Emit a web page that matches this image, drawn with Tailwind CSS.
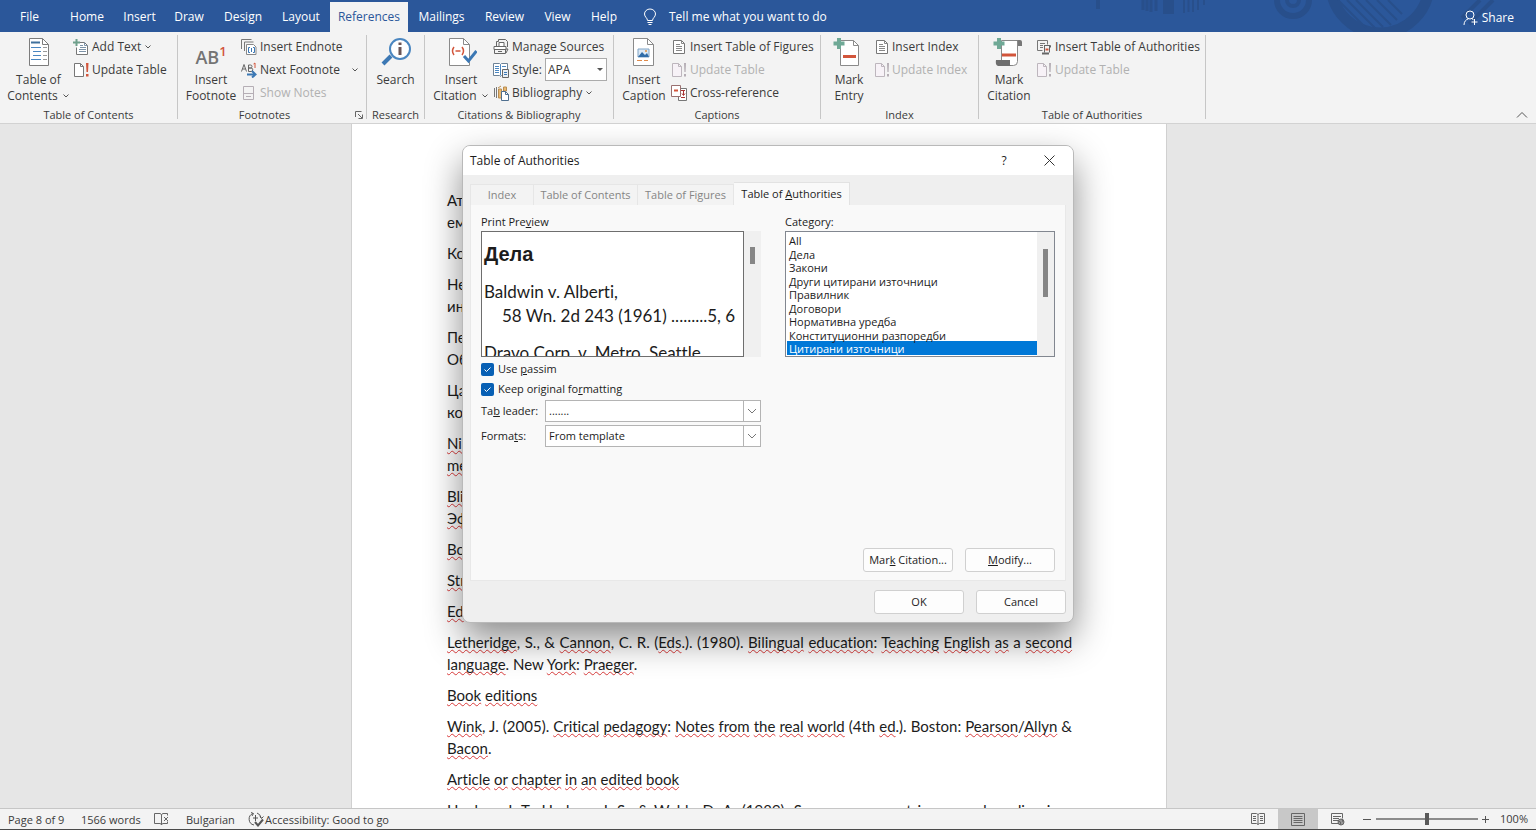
<!DOCTYPE html>
<html lang="en">
<head>
    <meta charset="UTF-8">
    <meta name="viewport" content="width=device-width, initial-scale=1.0">
    <title>Word - References</title>
    <script src="https://cdn.jsdelivr.net/npm/@tailwindcss/browser@4"></script>
</head>
<body class="h-screen overflow-hidden flex flex-col bg-[#e6e6e6] font-['Open_Sans',sans-serif] text-[12px] leading-4 text-[#3b3b3b]">

    <!-- Shared icons -->
    <svg class="hidden">
        <symbol id="i-update" viewBox="0 0 16 16">
            <path d="M1.5 1.5h6l3 3v10h-9z" fill="#fff" stroke="#777"/>
            <path d="M7.5 1.5v3h3" fill="none" stroke="#777"/>
            <path d="M13 1h2.5l-.5 9h-1.500zM13 12h2.500v2.500h-2.500z" fill="#d2553b"/>
        </symbol>
        <symbol id="i-update-off" viewBox="0 0 16 16">
            <path d="M1.500 1.500h6l3 3v10h-9z" fill="#f7f2f7" stroke="#bdb6bd"/>
            <path d="M7.500 1.500v3h3" fill="none" stroke="#bdb6bd"/>
            <path d="M13 1h2l-.4 9h-1.200zM13 12h2v2.500h-2z" fill="#b5aeb5"/>
        </symbol>
        <symbol id="i-list" viewBox="0 0 16 16">
            <path d="M2.500 1.500h8l3 3v10h-11z" fill="#fff" stroke="#777"/>
            <path d="M10.500 1.500v3h3M5 5.500h4M5 7.500h6M5 9.500h6M5 11.500h6" fill="none" stroke="#888"/>
        </symbol>
        <symbol id="i-down" viewBox="0 0 8 8">
            <path d="M1.500 2.500l2.500 2.500l2.500-2.500" fill="none" stroke="#555"/>
        </symbol>
        <symbol id="i-chevron" viewBox="0 0 10 10">
            <path d="M1 3l4 4l4-4" fill="none" stroke="#777"/>
        </symbol>
    </svg>

    <!-- Ribbon tabs -->
    <header class="relative h-8 shrink-0 bg-[#2b579a] text-white flex">
        <svg class="absolute right-0 top-0" width="446" height="32" viewBox="1090 0 446 32" fill="none" stroke="#284f8b">
            <path d="M1098 0v9" stroke-width="4"/>
            <path d="M1143 0v10M1147 0v11M1151 0v12M1156 0v11" stroke-width="3"/>
            <path d="M1168.500 0v14" stroke-width="11"/>
            <path d="M1184 0v13M1188.500 0v12M1193 0v12M1198 0v10M1204 0v5" stroke-width="2"/>
            <circle cx="1293" cy="0" r="16" stroke-width="6"/>
            <circle cx="1293" cy="0" r="6" stroke-width="4"/>
            <circle cx="1380" cy="-16" r="49" stroke-width="11"/>
            <path d="M1338 0l28 28M1347 0l28 28M1356 0l27 27M1366 0l25 25M1377 0l20 20M1388 0l14 14" stroke-width="2"/>
            <path d="M1480 0l-18 18M1493 0l-24 24" stroke-width="4"/>
        </svg>
        <nav class="flex items-end">
            <button class="w-[59px] h-[30px]">File</button>
            <button class="w-[56px] h-[30px]">Home</button>
            <button class="w-[49px] h-[30px]">Insert</button>
            <button class="w-[50px] h-[30px]">Draw</button>
            <button class="w-[58px] h-[30px]">Design</button>
            <button class="w-[58px] h-[30px]">Layout</button>
            <button class="w-[78px] h-[30px] bg-[#f3f3f3] text-[#2b579a]">References</button>
            <button class="w-[67px] h-[30px]">Mailings</button>
            <button class="w-[59px] h-[30px]">Review</button>
            <button class="w-[47px] h-[30px]">View</button>
            <button class="w-[46px] h-[30px]">Help</button>
            <button class="h-[30px] ml-4 flex items-center gap-3">
                <svg width="14" height="18" viewBox="0 0 14 18" fill="none" stroke="#fff">
                    <path d="M4.500 12.500c0-2.500-3-3.500-3-6.500a5.500 5 0 0 1 11 0c0 3-3 4-3 6.500zM4.500 14.500h5M5.500 16.500h3"/>
                </svg>
                Tell me what you want to do
            </button>
        </nav>
        <button class="relative ml-auto mr-[22px] mt-1 flex items-center gap-1">
            <svg width="15" height="16" viewBox="0 0 15 16" fill="none" stroke="#fff">
                <circle cx="7" cy="5" r="4"/>
                <path d="M1 15c0-3.500 2-5.500 4.500-6.200M9 8.800l1.500 1M11.500 9v6M8.500 12h6"/>
            </svg>
            Share
        </button>
    </header>

    <!-- Ribbon -->
    <section class="relative h-[92px] shrink-0 bg-[#f3f3f3] border-b border-[#d2d2d2] flex pt-[3px] pb-1">

        <div class="w-[178px] border-r border-[#c6c6c6] flex flex-col">
            <div class="flex h-[72px] shrink-0">
                <button class="w-[73px] ml-[2px] flex flex-col items-center justify-start">
                    <svg class="shrink-0" width="32" height="32" viewBox="0 0 32 32" fill="none">
                        <path d="M6.500 3.500h13l6 6v21h-19z" fill="#fff" stroke="#7c7c7c"/>
                        <path d="M19.500 3.500v6h6" stroke="#7c7c7c"/>
                        <path d="M8 7.500h9" stroke="#41719c" stroke-width="2"/>
                        <path d="M8 12.500h10M10 16.500h8M10 20.500h8M8 24.500h10" stroke="#4a86c0"/>
                        <path d="M20 12.500h4M20 16.500h4M20 20.500h4M20 24.500h4" stroke="#999"/>
                    </svg>
                    <span class="mt-[5px]">Table of</span>
                    <span class="flex items-center gap-1">Contents <svg width="8" height="8"><use href="#i-down"/></svg></span>
                </button>
                <div class="flex flex-col">
                    <button class="h-[23px] flex items-center gap-[3px] -ml-[2px]">
                        <svg width="16" height="16" viewBox="0 0 16 16" fill="none">
                            <path d="M4.500 3.500h7l3 3v9h-11v-7" fill="#fff" stroke="#777"/>
                            <path d="M11.500 3.500v3h3M7 6.500h3M7 8.500h6M6 10.500h7M6 12.500h7" stroke="#7d93a8"/>
                            <path d="M3.500 0v7M0 3.500h7" stroke="#6fa08c" stroke-width="2"/>
                        </svg>
                        Add Text <svg width="8" height="8"><use href="#i-down"/></svg>
                    </button>
                    <button class="h-[23px] flex items-center gap-[3px] -ml-[2px]"><svg width="16" height="16"><use href="#i-update"/></svg>Update Table</button>
                </div>
            </div>
            <div class="text-[11px] leading-4 text-center">Table of Contents</div>
        </div>

        <div class="w-[189px] border-r border-[#c6c6c6] flex flex-col">
            <div class="flex h-[72px] shrink-0">
                <button class="w-[60px] ml-[3px] flex flex-col items-center justify-start">
                    <span class="h-8 pt-[8px] flex text-[18px] leading-[28px] font-semibold text-[#747474]">AB<sup class="text-[13px] leading-4 text-[#d2553b] top-0 self-start">1</sup></span>
                    <span class="mt-[5px]">Insert</span>
                    <span>Footnote</span>
                </button>
                <div class="flex flex-col">
                    <button class="h-[23px] flex items-center gap-[3px]">
                        <svg width="16" height="16" viewBox="0 0 16 16" fill="none">
                            <path d="M.500 10v-9.500h10M3.500 12v-9h9" stroke="#777"/>
                            <path d="M5.500 5.500h7l2.500 2.500v7.500h-9.500z" fill="#fff" stroke="#888"/>
                            <path d="M9 8.500h-1.500v5h1.500M12 8.500h1.500v5h-1.500M10.500 9v4" stroke="#3c78b4"/>
                        </svg>
                        Insert Endnote
                    </button>
                    <button class="h-[23px] flex items-center gap-[3px]">
                        <svg width="16" height="16" viewBox="0 0 16 16" fill="none">
                            <path d="M.5 9.500l2.500-7l2.500 7M1.500 7h3M7.500 9.500v-6.500h2a1.500 1.500 0 0 1 0 3h-2h2.500a1.700 1.700 0 0 1 0 3.500z" stroke="#666"/>
                            <path d="M12.500 2l1.500-1v5" stroke="#d2553b"/>
                            <path d="M6 12.500h8M11 9l3.500 3.500l-3.500 3" stroke="#3c78b4" stroke-width="2"/>
                        </svg>
                        Next Footnote <svg class="ml-2" width="8" height="8"><use href="#i-down"/></svg>
                    </button>
                    <button disabled class="h-[23px] flex items-center gap-[3px] text-[#b1b1b1]">
                        <svg width="16" height="16" viewBox="0 0 16 16" fill="none" stroke="#b5aeb5">
                            <path d="M2.500 1.500h10v13h-10zM2.500 8.500h10M5 11.500h5"/>
                        </svg>
                        Show Notes
                    </button>
                </div>
            </div>
            <div class="flex text-[11px] leading-4">
                <span class="flex-1 text-center pr-1">Footnotes</span>
                <button class="mr-[3px]" aria-label="Footnote settings">
                    <svg width="8" height="8" viewBox="0 0 8 8" fill="none" stroke="#666"><path d="M.5 6v-5.500h6M3 3l4 4M7.500 3.500v4h-4"/></svg>
                </button>
            </div>
        </div>

        <div class="w-[58px] border-r border-[#c6c6c6] flex flex-col">
            <div class="flex h-[72px] shrink-0 justify-center">
                <button class="flex flex-col items-center justify-start">
                    <svg class="shrink-0" width="32" height="32" viewBox="0 0 32 32" fill="none">
                        <path d="M11 21l-8 8" stroke="#3c78b4" stroke-width="4"/>
                        <circle cx="20" cy="14" r="10" fill="#fff" stroke="#4a86c0" stroke-width="2"/>
                        <path d="M20 12v8M20 7.500v2.500" stroke="#6a5555" stroke-width="3"/>
                    </svg>
                    <span class="mt-[5px]">Search</span>
                </button>
            </div>
            <div class="text-[11px] leading-4 text-center">Research</div>
        </div>

        <div class="w-[189px] border-r border-[#c6c6c6] flex flex-col">
            <div class="flex h-[72px] shrink-0">
                <button class="w-[64px] ml-1 flex flex-col items-center justify-start">
                    <svg class="shrink-0" width="32" height="32" viewBox="0 0 32 32" fill="none">
                        <path d="M4.500 3.500h14l6 6v21h-20z" fill="#fff" stroke="#8a8a8a"/>
                        <path d="M18.500 3.500v6h6" stroke="#8a8a8a"/>
                        <path d="M9 12q-3 4 0 8M17 12q3 4 0 8M10.500 16h5" stroke="#d2553b" stroke-width="1.500"/>
                        <path d="M19 21l4.500 5l8-10" stroke="#3c78b4" stroke-width="3"/>
                    </svg>
                    <span class="mt-[5px]">Insert</span>
                    <span class="flex items-center gap-1">Citation <svg width="8" height="8"><use href="#i-down"/></svg></span>
                </button>
                <div class="flex flex-col">
                    <button class="h-[23px] flex items-center gap-[3px]">
                        <svg width="16" height="16" viewBox="0 0 16 16" fill="none" stroke="#666">
                            <path d="M3.500 7v-4.500h2v-2h7l2 2v5.500"/><path d="M6 7v-3.500h5v3.500" fill="#fff"/>
                            <path d="M1 7.500h12v3h-12z" fill="#fff"/><path d="M1.500 10.500h11v4h-11zM5 12.500h4M13 10h2l-2 4"/>
                        </svg>
                        Manage Sources
                    </button>
                    <div class="h-[23px] flex items-center gap-[3px]">
                        <svg width="16" height="16" viewBox="0 0 16 16" fill="none">
                            <path d="M.5 1.500h6l1 1l1-1h6v12h-6l-1 1l-1-1h-6z" fill="#fff" stroke="#6d8296"/>
                            <path d="M7.500 2.500v11M2 4.500h4M2 6.500h4M2 8.500h4M2 10.500h4M9 4.500h4" stroke="#4a86c0"/>
                            <path d="M9.500 7.500h6v8h-6z" fill="#e8eef4" stroke="#666"/><path d="M11 10.500h3M11 12.500h3" stroke="#3c78b4"/>
                        </svg>
                        <label for="style" class="w-[30px]">Style:</label>
                        <span class="relative h-[23px]">
                            <select id="style" class="appearance-none w-[62px] h-[23px] bg-white border border-[#ababab] pl-[2px]"><option>APA</option></select>
                            <svg class="absolute right-1 top-[10px] pointer-events-none" width="6" height="4" viewBox="0 0 6 4"><path d="M0 0h6l-3 3z" fill="#555"/></svg>
                        </span>
                    </div>
                    <button class="h-[23px] flex items-center gap-[3px]">
                        <svg width="16" height="16" viewBox="0 0 16 16" fill="none">
                            <path d="M1.500 3v9M3.500 2v11" stroke="#777"/><path d="M5.500 4h3v9h-3z" fill="#e9b872" stroke="#b98d50"/>
                            <path d="M5 3l3-2M10.500 2h3v4h-3z" fill="#e9b872" stroke="#b98d50"/>
                            <path d="M8.500 6.500h4l3 3v6h-7z" fill="#fff" stroke="#4f6f8f"/><path d="M12.500 6.500v3h3" stroke="#4f6f8f"/>
                        </svg>
                        Bibliography <svg width="8" height="8"><use href="#i-down"/></svg>
                    </button>
                </div>
            </div>
            <div class="text-[11px] leading-4 text-center">Citations &amp; Bibliography</div>
        </div>

        <div class="w-[207px] border-r border-[#c6c6c6] flex flex-col">
            <div class="flex h-[72px] shrink-0">
                <button class="w-[54px] ml-[3px] flex flex-col items-center justify-start">
                    <svg class="shrink-0" width="32" height="32" viewBox="0 0 32 32" fill="none">
                        <path d="M5.500 3.500h14l6 6v21h-20z" fill="#fff" stroke="#8a8a8a"/>
                        <path d="M19.500 3.500v6h6" stroke="#8a8a8a"/>
                        <path d="M10 14h11v8h-11z" fill="#dce9f5" stroke="#7fa3c5"/>
                        <path d="M10 22l4-5l3 3l2-2l2 4z" fill="#2f6ca8"/><circle cx="18" cy="16" r="1" fill="#e0903c"/>
                        <path d="M9 25.500h5M16 25.500h4" stroke="#e08a4a"/>
                    </svg>
                    <span class="mt-[5px]">Insert</span>
                    <span>Caption</span>
                </button>
                <div class="flex flex-col">
                    <button class="h-[23px] flex items-center gap-[3px]"><svg width="16" height="16"><use href="#i-list"/></svg>Insert Table of Figures</button>
                    <button disabled class="h-[23px] flex items-center gap-[3px] text-[#b1b1b1]"><svg width="16" height="16"><use href="#i-update-off"/></svg>Update Table</button>
                    <button class="h-[23px] flex items-center gap-[3px]">
                        <svg width="16" height="16" viewBox="0 0 16 16" fill="none">
                            <path d="M7.500 3.500h8v12h-8z" fill="#fff" stroke="#777"/>
                            <path d="M.5 .500h9v11h-9z" fill="#fff" stroke="#9a7070"/>
                            <path d="M3 5.500h4" stroke="#d2553b" stroke-width="2"/><path d="M10 5.500h4M12.500 6v4M11 8.500l1.500 2l1.500-2M10 12.500h4" stroke="#a33"/>
                        </svg>
                        Cross-reference
                    </button>
                </div>
            </div>
            <div class="text-[11px] leading-4 text-center">Captions</div>
        </div>

        <div class="w-[158px] border-r border-[#c6c6c6] flex flex-col">
            <div class="flex h-[72px] shrink-0">
                <button class="w-[50px] ml-[3px] flex flex-col items-center justify-start">
                    <svg class="shrink-0" width="32" height="32" viewBox="0 0 32 32" fill="none">
                        <path d="M7.500 5.500h13l5 5v20h-18z" fill="#fff" stroke="#8a8a8a"/>
                        <path d="M20.500 5.500v5h5" stroke="#8a8a8a"/>
                        <path d="M6 3v11M.5 8.500h11" stroke="#6fa996" stroke-width="4"/>
                        <path d="M10 21.500h13" stroke="#d2553b" stroke-width="3"/>
                    </svg>
                    <span class="mt-[5px]">Mark</span>
                    <span>Entry</span>
                </button>
                <div class="flex flex-col">
                    <button class="h-[23px] flex items-center gap-[2px]"><svg width="16" height="16"><use href="#i-list"/></svg>Insert Index</button>
                    <button disabled class="h-[23px] flex items-center gap-[2px] text-[#b1b1b1]"><svg width="16" height="16"><use href="#i-update-off"/></svg>Update Index</button>
                </div>
            </div>
            <div class="text-[11px] leading-4 text-center">Index</div>
        </div>

        <div class="w-[227px] border-r border-[#c6c6c6] flex flex-col">
            <div class="flex h-[72px] shrink-0">
                <button class="w-[54px] ml-[3px] flex flex-col items-center justify-start">
                    <svg class="shrink-0" width="32" height="32" viewBox="0 0 32 32" fill="none">
                        <path d="M8.500 5.500h16v21q0 4-4 4h-12z" fill="#fff" stroke="#8a8a8a"/>
                        <path d="M22 5h5q2 0 2 2v4h-4v-4q0-2-3-2z" fill="#777"/>
                        <path d="M3 25h14v5q0 1 2 1h-14q-3-1-2-6z" fill="#6e6e6e"/>
                        <path d="M6 3v11M.5 8.500h11" stroke="#6fa996" stroke-width="4"/>
                        <path d="M9 20h14" stroke="#d2553b" stroke-width="3"/>
                    </svg>
                    <span class="mt-[5px]">Mark</span>
                    <span>Citation</span>
                </button>
                <div class="flex flex-col">
                    <button class="h-[23px] flex items-center gap-[3px]">
                        <svg width="16" height="16" viewBox="0 0 16 16" fill="none">
                            <path d="M1.500 1.500h10v4M1.500 1.500v10h5M4 4.500h5M4 6.500h3M4 8.500h3" stroke="#777"/>
                            <path d="M8 6.500h6.500v2M8.500 6.500v7M13.500 6.500v7" stroke="#666"/><path d="M6 14.500h7" stroke="#666" stroke-width="2"/>
                            <path d="M9.500 10.500h3" stroke="#d2553b" stroke-width="2"/>
                        </svg>
                        Insert Table of Authorities
                    </button>
                    <button disabled class="h-[23px] flex items-center gap-[3px] text-[#b1b1b1]"><svg width="16" height="16"><use href="#i-update-off"/></svg>Update Table</button>
                </div>
            </div>
            <div class="text-[11px] leading-4 text-center">Table of Authorities</div>
        </div>

        <button class="ml-auto mr-2 self-end" aria-label="Collapse the ribbon">
            <svg width="12" height="8" viewBox="0 0 12 8" fill="none" stroke="#555"><path d="M1 6.500l5-5l5 5"/></svg>
        </button>
    </section>

    <!-- Document -->
    <main class="relative flex-1 min-h-0 overflow-hidden pr-[18px]">
        <article class="mx-auto w-[816px] min-h-full bg-white border-x border-[#d0d0d0] pt-[65px] pl-[95px] pr-[94px] font-['Lato',sans-serif] text-[15px] leading-[22px] text-[#1c1c1c] [font-variant-ligatures:none] [&_p]:mb-[9px] [&_span]:block [&_u]:decoration-wavy [&_u]:decoration-[#d83b3b] [&_u]:decoration-1 [&_u]:underline-offset-1 [&_u]:[text-decoration-skip-ink:none]">
            <p><span>Ат</span><span>ем</span></p>
            <p>Ко</p>
            <p><span>Не</span><span>ин</span></p>
            <p><span>Пе</span><span>Об</span></p>
            <p><span>Ца</span><span>ко</span></p>
            <p><span><u>Nie</u></span><span><u>me</u></span></p>
            <p><span><u>Bli</u></span><span><u>Эф</u></span></p>
            <p><u>Bo</u></p>
            <p><u>Str</u></p>
            <p><u>Ed</u></p>
            <p>
                <span class="[text-align-last:justify]"><u>Letheridge</u>, S., &amp; <u>Cannon</u>, C. R. (<u>Eds</u>.). (1980). <u>Bilingual</u> <u>education</u>: <u>Teaching</u> <u>English</u> <u>as</u> a <u>second</u></span>
                <span><u>language</u>. New <u>York</u>: <u>Praeger</u>.</span>
            </p>
            <p><u>Book</u> <u>editions</u></p>
            <p>
                <span class="[text-align-last:justify]"><u>Wink</u>, J. (2005). <u>Critical</u> <u>pedagogy</u>: <u>Notes</u> <u>from</u> <u>the</u> <u>real</u> <u>world</u> (4th <u>ed</u>.). Boston: <u>Pearson</u>/<u>Allyn</u> &amp;</span>
                <span><u>Bacon</u>.</span>
            </p>
            <p><u>Article</u> <u>or</u> <u>chapter</u> <u>in</u> <u>an</u> <u>edited</u> <u>book</u></p>
            <p><span class="[text-align-last:justify]">Hughes, J. T., Hudson, J. S., &amp; Webb, D. A. (1989). Some assessment issues and reading in a</span></p>
        </article>
    </main>

    <!-- Status bar -->
    <footer class="h-[22px] shrink-0 bg-[#f3f3f3] border-t border-[#c6c6c6] border-b border-b-[#4a4a4a] flex items-center text-[11px] pl-2 pt-px">
        <span class="w-[73px]">Page 8 of 9</span>
        <span class="w-[73px]">1566 words</span>
        <svg class="mr-[17px]" width="15" height="13" viewBox="0 0 15 13" fill="none" stroke="#666">
            <path d="M7.500 2v10M7.500 2l-1-1.500h-6v10h6l1 1.500l1-1.500h5v-2M7.500 2l1-1.500h5v2M10 4l4 4M14 4l-4 4"/>
        </svg>
        <span class="w-[62px]">Bulgarian</span>
        <button class="flex items-center">
            <svg width="17" height="15" viewBox="0 0 17 15" fill="none" stroke="#555">
                <path d="M5 1.500a6 6 0 0 0 1 11.500M9 1a6 6 0 0 1 4 5M3 .500l2.500 1l-1.500 2.500M7.500 3v6M5 6h5M12 4l1.500 2.500l2-2"/>
                <path d="M7 10l3 3.500l5-6" stroke-width="2"/>
            </svg>
            Accessibility: Good to go
        </button>
        <div class="ml-auto flex items-center self-stretch -mt-px">
            <button class="w-10 flex justify-center" aria-label="Read mode">
                <svg width="14" height="12" viewBox="0 0 14 12" fill="none" stroke="#666"><path d="M7 1.500v10M.5 .500h5l1.500 1l1.500-1h5v10h-5l-1.500 1l-1.500-1h-5zM2 3.500h3M2 5.500h3M2 7.500h3M9 3.500h3M9 5.500h3M9 7.500h3"/></svg>
            </button>
            <button class="w-10 h-full bg-[#c8c8c8] flex justify-center items-center" aria-label="Print layout">
                <svg width="14" height="13" viewBox="0 0 14 13" fill="none" stroke="#666"><path d="M.5 .500h13v12h-13zM2.500 3.500h9M2.500 5.500h9M2.500 7.500h9M2.500 9.500h9"/></svg>
            </button>
            <button class="w-10 flex justify-center" aria-label="Web layout">
                <svg width="14" height="13" viewBox="0 0 14 13" fill="none" stroke="#666"><path d="M7 10.500h-6.500v-10h11v5M2 3.500h8M2 5.500h6M2 7.500h5"/><circle cx="10" cy="9" r="3" fill="#999"/><path d="M7.500 8l2 1v2.500M11 6l1 3"/></svg>
            </button>
            <button class="w-[18px]" aria-label="Zoom out"><svg class="mx-auto" width="9" height="9" viewBox="0 0 9 9" stroke="#555"><path d="M0 4.500h8"/></svg></button>
            <input aria-label="Zoom" type="range" value="50" class="appearance-none w-[102px] h-4 bg-transparent [&::-webkit-slider-runnable-track]:h-[2px] [&::-webkit-slider-runnable-track]:bg-[#8c8c8c] [&::-webkit-slider-thumb]:appearance-none [&::-webkit-slider-thumb]:w-1 [&::-webkit-slider-thumb]:h-3 [&::-webkit-slider-thumb]:-mt-[5px] [&::-webkit-slider-thumb]:bg-[#5a5a5a]">
            <button class="w-[15px]" aria-label="Zoom in"><svg class="mx-auto" width="9" height="9" viewBox="0 0 9 9" stroke="#555"><path d="M1 4.500h7M4.500 1v7"/></svg></button>
            <span class="w-[43px] pr-2 text-right">100%</span>
        </div>
    </footer>

    <!-- Table of Authorities dialog -->
    <div role="dialog" aria-label="Table of Authorities" class="absolute top-[145px] inset-x-0 mx-auto w-[612px] rounded-lg border border-[#b9b9b9] bg-[#efefef] overflow-hidden text-[11px] text-[#1c1c1c] shadow-[0_16px_36px_rgba(0,0,0,0.45)]">
        <div class="h-[29px] bg-white flex items-center pl-[7px] text-[12px]">
            <h2>Table of Authorities</h2>
            <button class="ml-auto w-[46px]" aria-label="Help">?</button>
            <button class="w-[45px] mr-px flex justify-center" aria-label="Close"><svg width="11" height="11" viewBox="0 0 11 11" stroke="#333"><path d="M.5 .500l10 10M10.500 .500l-10 10"/></svg></button>
        </div>

        <div class="px-[7px] pt-[7px] pb-2">
            <div class="flex items-end text-[#858585]">
                <button class="w-[64px] h-[21px] bg-[#f3f3f3] border border-b-0 border-[#e6e6e6]">Index</button>
                <button class="w-[104px] h-[21px] bg-[#f3f3f3] border border-b-0 border-l-0 border-[#e6e6e6]">Table of Contents</button>
                <button class="w-[96px] h-[21px] bg-[#f3f3f3] border border-b-0 border-l-0 border-[#e6e6e6]">Table of Figures</button>
                <button class="w-[116px] h-[23px] bg-[#f9f9f9] border border-b-0 border-l-0 border-[#e2e2e2] text-[#1c1c1c]">Table of <span class="underline">A</span>uthorities</button>
            </div>

            <div class="bg-[#f9f9f9] border border-t-0 border-[#e8e8e8] pt-[9px] px-[10px] pb-2 flex flex-col h-[376px]">
                <div class="flex">
                    <div class="w-[280px] mr-6">
                        <p class="mb-px">Print Pre<span class="underline">v</span>iew</p>
                        <div class="flex h-[126px]">
                            <div class="w-[263px] shrink-0 bg-white border border-[#6e6e6e] overflow-hidden pl-[2px] font-['Lato',sans-serif] text-[17px] leading-6 [font-variant-ligatures:none]">
                                <p class="font-['Liberation_Sans',sans-serif] font-bold text-[20px] mt-[10px] mb-[14px]">Дела</p>
                                <p>Baldwin v. Alberti,</p>
                                <p class="pl-[18px] whitespace-nowrap">58 Wn. 2d 243 (1961) .........5, 6</p>
                                <p class="mt-[13px] whitespace-nowrap">Dravo Corp. v. Metro. Seattle</p>
                            </div>
                            <div class="flex-1 bg-[#f0f0f0] pt-4 pl-[6px]"><div class="w-[5px] h-[17px] bg-[#868686]"></div></div>
                        </div>
                    </div>
                    <div class="w-[270px]">
                        <label for="category" class="block mb-px">Cate<span class="underline">g</span>ory:</label>
                        <div class="flex h-[126px] bg-white border border-[#828790]">
                            <select id="category" size="9" class="w-[251px] h-[124px] pt-px pl-px overflow-hidden bg-white outline-none [&_option]:p-0 [&_option]:pl-[2px] [&_option]:min-h-0 [&_option]:odd:h-[14px] [&_option]:even:h-[13px] [&_option]:leading-[13px]">
                                <option>All</option>
                                <option>Дела</option>
                                <option>Закони</option>
                                <option>Други цитирани източници</option>
                                <option>Правилник</option>
                                <option>Договори</option>
                                <option>Нормативна уредба</option>
                                <option>Конституционни разпоредби</option>
                                <option selected class="bg-linear-to-r from-[#0078d7] to-[#0078d7] text-white!">Цитирани източници</option>
                            </select>
                            <div class="flex-1 bg-[#f0f0f0] pt-[17px] pl-[6px]"><div class="w-[5px] h-[48px] bg-[#868686]"></div></div>
                        </div>
                    </div>
                </div>

                <label class="mt-1 flex items-center gap-1">
                    <input type="checkbox" checked class="peer sr-only">
                    <svg width="13" height="13" viewBox="0 0 13 13"><rect width="13" height="13" rx="2" fill="#0860b4"/><path d="M3.500 6.500l2 2l4-4" fill="none" stroke="#fff"/></svg>
                    <span>Use <span class="underline">p</span>assim</span>
                </label>
                <label class="mt-1 flex items-center gap-1">
                    <input type="checkbox" checked class="peer sr-only">
                    <svg width="13" height="13" viewBox="0 0 13 13"><rect width="13" height="13" rx="2" fill="#0860b4"/><path d="M3.500 6.500l2 2l4-4" fill="none" stroke="#fff"/></svg>
                    <span>Keep original fo<span class="underline">r</span>matting</span>
                </label>
                <div class="mt-[3px] flex items-center">
                    <label for="leader" class="w-[64px]">Ta<span class="underline">b</span> leader:</label>
                    <div class="relative">
                        <select id="leader" class="block appearance-none w-[216px] h-[22px] bg-white border border-[#b4b4b4] pl-[3px]"><option>.......</option></select>
                        <span class="absolute right-0 top-0 w-[18px] h-[22px] border border-[#b4b4b4] flex items-center justify-center pointer-events-none"><svg width="10" height="10"><use href="#i-chevron"/></svg></span>
                    </div>
                </div>
                <div class="mt-[3px] flex items-center">
                    <label for="formats" class="w-[64px]">Forma<span class="underline">t</span>s:</label>
                    <div class="relative">
                        <select id="formats" class="block appearance-none w-[216px] h-[22px] bg-white border border-[#b4b4b4] pl-[3px]"><option>From template</option></select>
                        <span class="absolute right-0 top-0 w-[18px] h-[22px] border border-[#b4b4b4] flex items-center justify-center pointer-events-none"><svg width="10" height="10"><use href="#i-chevron"/></svg></span>
                    </div>
                </div>

                <div class="mt-auto flex justify-end gap-3">
                    <button class="w-[90px] h-6 rounded-[3px] bg-[#fdfdfd] border border-[#d0d0d0]">Mar<span class="underline">k</span> Citation...</button>
                    <button class="w-[90px] h-6 rounded-[3px] bg-[#fdfdfd] border border-[#d0d0d0]"><span class="underline">M</span>odify...</button>
                </div>
            </div>

            <div class="mt-[9px] flex justify-end gap-3">
                <button class="w-[90px] h-6 rounded-[3px] bg-[#fdfdfd] border border-[#d0d0d0]">OK</button>
                <button class="w-[90px] h-6 rounded-[3px] bg-[#fdfdfd] border border-[#d0d0d0]">Cancel</button>
            </div>
        </div>
    </div>
</body>
</html>
